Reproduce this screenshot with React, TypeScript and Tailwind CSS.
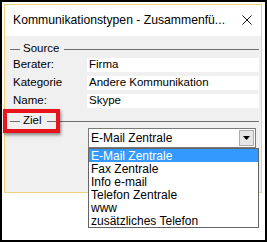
import React from 'react'

const items = [
    'E-Mail Zentrale',
    'Fax Zentrale',
    'Info e-mail',
    'Telefon Zentrale',
    'www',
    'zusätzliches Telefon',
]

const GroupHeader: React.FC<{ title: string; className?: string }> = ({ title, className }) => (
    <div className={`flex items-center h-[12px] pl-[5px] ${className ?? ''}`}>
        <div className="w-[10px] h-px bg-[#6e6e6e]" />
        <span className="mx-[3px] text-[11.5px] leading-none text-black">{title}</span>
        <div className="flex-1 h-px bg-[#6e6e6e] ml-[2px]" />
    </div>
)

const Row: React.FC<{ label: string; value: string }> = ({ label, value }) => (
    <div className="flex items-center h-[14px] pl-[8px]">
        <span className="w-[74px] text-[11.5px] leading-none text-black">{label}</span>
        <div className="flex-1 h-[14px] bg-white flex items-center pl-[2px] text-[11.5px] leading-none text-black">
            {value}
        </div>
    </div>
)

const App: React.FC = () => {
    return (
        <div className="relative w-[267px] h-[242px] border-2 border-black bg-white p-[2px] font-['Liberation_Sans',Arial,sans-serif]">
            <div className="w-[258px] h-[189px] border border-[#efd27c] flex flex-col">
                <div className="h-[31px] bg-white flex items-center justify-between pl-[8px] pr-[9px]">
                    <span className="text-[12.2px] leading-none text-black">Kommunikationstypen - Zusammenfü...</span>
                    <svg width="10" height="10" viewBox="0 0 10 10" className="mb-[1px]">
                        <path d="M0.5 0.5 L9.5 9.5 M9.5 0.5 L0.5 9.5" stroke="#111" strokeWidth="1" fill="none" />
                    </svg>
                </div>
                <div className="flex-1 bg-[#f0f0f0] pt-[7px] pr-[2px]">
                    <GroupHeader title="Source" />
                    <div className="flex flex-col gap-[4px] mt-[3px]">
                        <Row label="Berater:" value="Firma" />
                        <Row label="Kategorie" value="Andere Kommunikation" />
                        <Row label="Name:" value="Skype" />
                    </div>
                    <GroupHeader title="Ziel" className="mt-[7px]" />
                    <div className="mt-[1px] ml-[83px] w-[168px] h-[20px] bg-white border border-[#7a7a7a] flex items-center justify-between pl-[2px] pr-[1px]">
                        <span className="text-[12px] leading-none text-black">E-Mail Zentrale</span>
                        <div className="w-[15px] h-[16px] bg-[#e6e6e6] border border-[#adadad] flex items-center justify-center">
                            <svg width="7" height="4" viewBox="0 0 7 4">
                                <path d="M0 0 L7 0 L3.5 4 Z" fill="#000" />
                            </svg>
                        </div>
                    </div>
                </div>
            </div>

            <div className="absolute left-[86px] top-[146px] w-[171px] bg-white border border-[#646464] flex flex-col">
                {items.map((item, i) => (
                    <div
                        key={i}
                        className={`h-[13px] flex items-center pl-[2px] text-[12px] leading-none ${i === 0 ? 'bg-[#3399ff] text-white' : 'text-black'}`}
                    >
                        {item}
                    </div>
                ))}
            </div>

            <div className="absolute left-[1px] top-[107px] w-[57px] h-[24px] border-4 border-[#e8141c] shadow-[1px_2px_3px_rgba(0,0,0,0.45)]" />
        </div>
    )
}

export default App
